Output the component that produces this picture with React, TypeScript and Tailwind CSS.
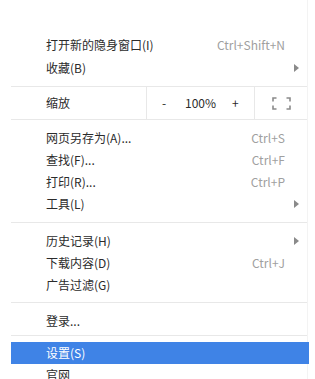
import { ReactNode } from 'react';

type Item = { label: string; shortcut?: string; submenu?: boolean; active?: boolean };

function Arrow() {
  return (
    <svg width="5" height="8" viewBox="0 0 5 8" className="block">
      <polygon points="0,0 5,4 0,8" fill="#8a8a8a" />
    </svg>
  );
}

function FullscreenIcon() {
  return (
    <svg width="19" height="13" viewBox="0 0 19 13" className="block">
      <g fill="none" stroke="#8a8a8a" strokeWidth="1.6">
        <path d="M1 4.5V1H4.5" />
        <path d="M14.5 1H18V4.5" />
        <path d="M1 8.5V12H4.5" />
        <path d="M14.5 12H18V8.5" />
      </g>
    </svg>
  );
}

function Row({ item }: { item: Item }) {
  return (
    <div
      className={`flex items-center h-[22px] pl-[35px] ${
        item.active ? 'bg-[#3f83e6] text-white' : 'text-[#2b2b2b]'
      }`}
    >
      <span className="flex-1 whitespace-nowrap">{item.label}</span>
      {item.shortcut && <span className="text-[#a0a0a0] whitespace-nowrap">{item.shortcut}</span>}
      <span className="w-[22px] shrink-0 flex justify-end pr-[8px]">{item.submenu && <Arrow />}</span>
    </div>
  );
}

function Group({ items, className }: { items: Item[]; className: string }) {
  return (
    <div className={className}>
      {items.map((it) => (
        <Row key={it.label} item={it} />
      ))}
    </div>
  );
}

function Sep() {
  return <div className="h-px bg-[#e8e8e8]" />;
}

function Cell({ children, className }: { children: ReactNode; className: string }) {
  return <div className={`flex items-center h-full ${className}`}>{children}</div>;
}

export default function App() {
  return (
    <div className="w-[315px] h-[379px] bg-white overflow-hidden font-['Noto_Sans_CJK_SC','Noto_Sans',sans-serif] text-[12px] leading-none">
      <div className="ml-[11px] mr-[7px] border-r border-[#f3f3f3]">
        <div className="pt-[33px] pb-[7px]">
          <div className="flex items-center h-[23px] pl-[35px] text-[#2b2b2b]">
            <span className="flex-1">打开新的隐身窗口(I)</span>
            <span className="text-[#a0a0a0]">Ctrl+Shift+N</span>
            <span className="w-[22px]" />
          </div>
          <div className="flex items-center h-[23px] pl-[35px] text-[#2b2b2b]">
            <span className="flex-1">收藏(B)</span>
            <span className="w-[22px] flex justify-end pr-[8px]">
              <Arrow />
            </span>
          </div>
        </div>
        <Sep />
        <div className="flex h-[32px] text-[#2b2b2b]">
          <Cell className="w-[136px] pl-[35px] border-r border-[#e8e8e8]">缩放</Cell>
          <Cell className="w-[108px] border-r border-[#e8e8e8]">
            <span className="pl-[15px] w-[38px]">-</span>
            <span className="w-[38px]">100%</span>
            <span className="pl-[9px]">+</span>
          </Cell>
          <Cell className="flex-1 justify-center">
            <FullscreenIcon />
          </Cell>
        </div>
        <Sep />
        <Group
          className="pt-[7px] pb-[7px]"
          items={[
            { label: '网页另存为(A)...', shortcut: 'Ctrl+S' },
            { label: '查找(F)...', shortcut: 'Ctrl+F' },
            { label: '打印(R)...', shortcut: 'Ctrl+P' },
            { label: '工具(L)', submenu: true },
          ]}
        />
        <Sep />
        <Group
          className="pt-[7px] pb-[6px]"
          items={[
            { label: '历史记录(H)', submenu: true },
            { label: '下载内容(D)', shortcut: 'Ctrl+J' },
            { label: '广告过滤(G)' },
          ]}
        />
        <Sep />
        <Group className="pt-[7px] pb-[3px]" items={[{ label: '登录...' }]} />
        <Sep />
        <Group
          className="pt-[6px] -mr-[2px]"
          items={[{ label: '设置(S)', active: true }, { label: '官网' }]}
        />
      </div>
    </div>
  );
}
